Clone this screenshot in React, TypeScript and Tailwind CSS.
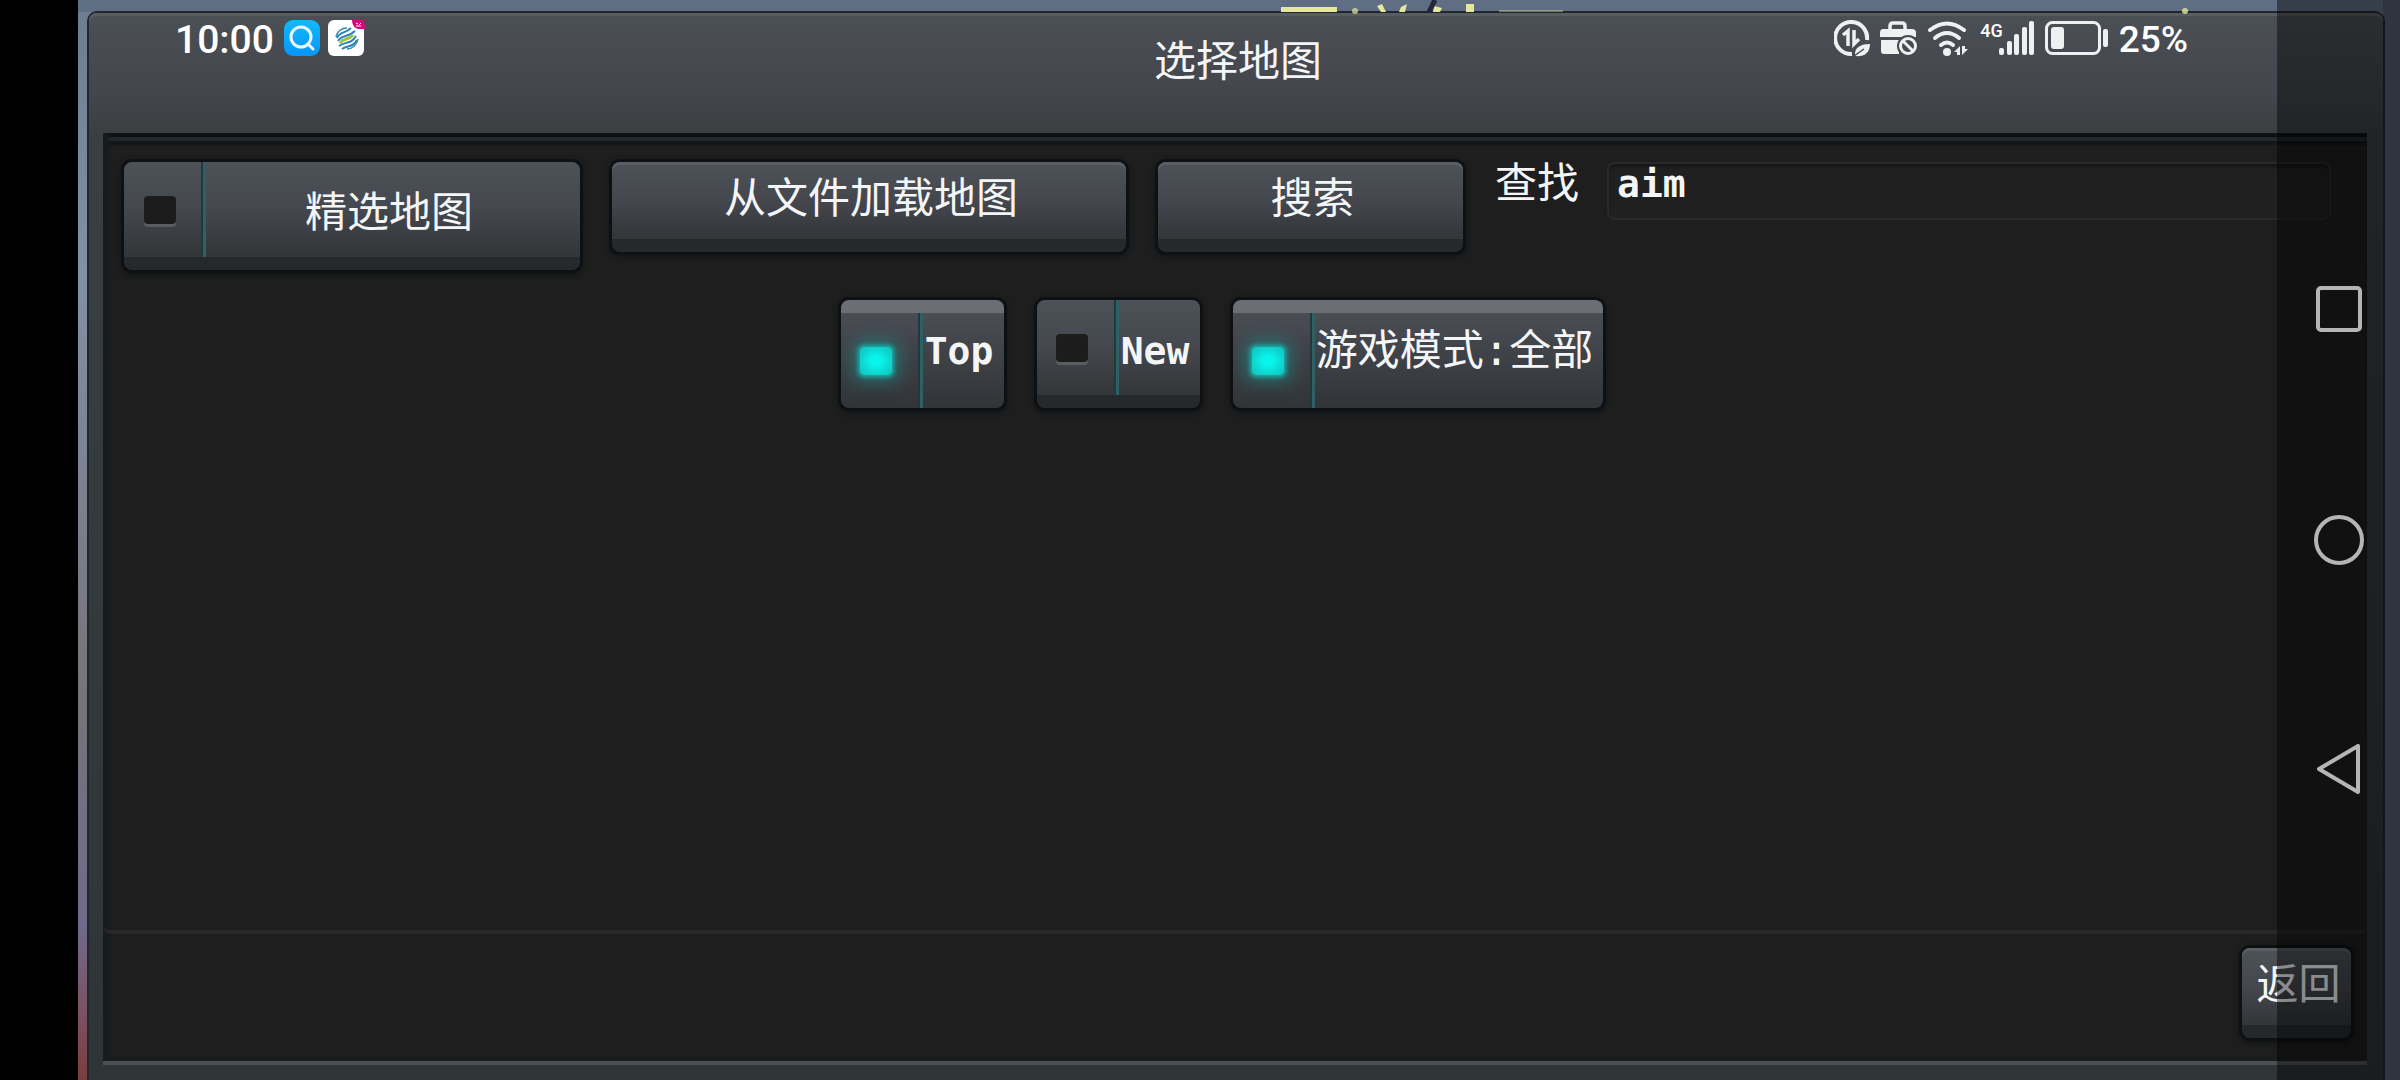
import { useState } from 'react';
import type { ReactNode } from 'react';
import clsx from 'clsx';

// 顶部露出的背景标题
const BackdropTitle = () => (
  <svg
    className="absolute top-0 left-[1281px]"
    width="910"
    height="14"
    viewBox="0 0 910 14"
    aria-hidden="true"
  >
    <g fill="#e6e79f">
      <rect x="0" y="7" width="56" height="5" />
      <circle cx="74" cy="11" r="3" opacity="0.7" />
      <path d="M96 6l5-2 4 8h-5z" />
      <path d="M126 4l-6 3-2 5h6z" />
      <path d="M153 6l8 2-2 4h-7z" />
      <rect x="185" y="4" width="8" height="8" />
      <rect x="218" y="10" width="64" height="2" opacity="0.4" />
      <circle cx="904" cy="11" r="3" opacity="0.8" />
    </g>
    <path d="M154 0l-6 12" stroke="#25253c" strokeWidth="5" />
  </svg>
);

const SearchAppIcon = () => (
  <svg width="36" height="36" viewBox="0 0 36 36" aria-hidden="true">
    <defs>
      <linearGradient id="searchBg" x1="0" y1="0" x2="0" y2="1">
        <stop offset="0" stopColor="#12b9fb" />
        <stop offset="1" stopColor="#0796fb" />
      </linearGradient>
    </defs>
    <rect width="36" height="36" rx="9" fill="url(#searchBg)" />
    <circle cx="17" cy="17" r="10" fill="none" stroke="#eaf8ff" strokeWidth="3" />
    <path d="M24 24l5 5" stroke="#eaf8ff" strokeWidth="3" strokeLinecap="round" />
  </svg>
);

const CarrierAppIcon = () => (
  <svg width="38" height="36" viewBox="0 0 38 36" aria-hidden="true">
    <rect width="36" height="36" rx="6" fill="#fff" />
    <g fill="none">
      <path d="M9 18c3-7 8-4 14-10" stroke="#2b7fc6" strokeWidth="2" />
      <path d="M10 21c4-7 10-3 17-10" stroke="#2b7fc6" strokeWidth="2" />
      <path d="M12 23c4-6 8-2 13-8" stroke="#9bc832" strokeWidth="3" />
      <path d="M11 26c6-5 12-1 17-10" stroke="#2b7fc6" strokeWidth="2" />
      <path d="M14 29c5-4 11-1 15-9" stroke="#2b7fc6" strokeWidth="2" />
      <path d="M8 17c1-6 6-9 11-9M30 19c-1 6-6 10-11 10" stroke="#2e8f9c" strokeWidth="1.5" />
    </g>
    <path d="M24 0h8q5 0 6 9h-7c-4 0-7-4-7-9z" fill="#d6087b" />
    <path d="M28 3l2 1M33 3l-2 2M28 6h5" stroke="#fff" strokeWidth="1" />
  </svg>
);

const DataSaverIcon = () => (
  <svg width="36" height="37" viewBox="0 0 36 37" aria-hidden="true">
    <path
      d="M33 20A16 16 0 1 0 18 34"
      fill="none"
      stroke="#eef0f2"
      strokeWidth="4"
    />
    <path d="M9 15l5-4v15M20 10v14l5-5" fill="none" stroke="#eef0f2" strokeWidth="3.5" />
    <path d="M36 24c-9 0-16 3-15 12 9 1 15-3 15-12z" fill="#eef0f2" />
    <path d="M20 36l10-7" stroke="#46494e" strokeWidth="1.5" />
  </svg>
);

const WorkOffIcon = () => (
  <svg width="38" height="35" viewBox="0 0 38 35" aria-hidden="true">
    <path d="M10 11V5q0-3 3-3h9q3 0 3 3v6" fill="none" stroke="#eef0f2" strokeWidth="3.5" />
    <path d="M3 8h29q4 0 4 4v4H0v-4q0-4 3-4z" fill="#eef0f2" />
    <path d="M1 19h18v14H4q-3 0-3-3z" fill="#eef0f2" />
    <circle cx="28" cy="25" r="11" fill="#46494e" />
    <circle cx="28" cy="25" r="7.5" fill="none" stroke="#eef0f2" strokeWidth="3" />
    <path d="M23 20l10 10" stroke="#eef0f2" strokeWidth="3" />
  </svg>
);

const WifiIcon = () => (
  <svg width="42" height="35" viewBox="0 0 42 35" aria-hidden="true">
    <g fill="none" stroke="#eef0f2" strokeWidth="4" strokeLinecap="round">
      <path d="M2 9Q19-4 36 9" />
      <path d="M7 17Q19 7 31 17" />
      <path d="M13 24q6-5 12 0" />
    </g>
    <circle cx="19" cy="31" r="4" fill="#eef0f2" />
    <path d="M26 31l6-6v9h-3v-3zM34 25v9l6-6h-3v-3z" fill="#eef0f2" />
  </svg>
);

const SignalIcon = () => (
  <svg width="36" height="34" viewBox="0 0 36 34" fill="#eef0f2" aria-hidden="true">
    <rect x="0" y="27" width="5" height="7" rx="2" />
    <rect x="8" y="20" width="5" height="14" rx="2" />
    <rect x="15" y="13" width="5" height="21" rx="2" />
    <rect x="23" y="6" width="5" height="28" rx="2" />
    <rect x="30" y="0" width="5" height="34" rx="2" />
  </svg>
);

const BatteryIcon = () => (
  <svg width="64" height="34" viewBox="0 0 64 34" aria-hidden="true">
    <rect x="1.5" y="1.5" width="53" height="31" rx="6" fill="none" stroke="#eef0f2" strokeWidth="3" />
    <rect x="6" y="6" width="13" height="22" rx="3" fill="#eef0f2" />
    <rect x="58" y="8" width="5" height="18" rx="2" fill="#eef0f2" />
  </svg>
);

const StatusBar = () => (
  <div className="absolute inset-x-0 top-0 flex h-19 items-center justify-between pr-[212px] pl-[175px] font-['Roboto',sans-serif] text-[39px] font-medium text-white">
    <div className="flex items-center gap-2.5">
      <span className="pt-1 leading-10">10:00</span>
      <div className="flex gap-2">
        <SearchAppIcon />
        <CarrierAppIcon />
      </div>
    </div>
    <div className="flex items-center gap-2.5">
      <DataSaverIcon />
      <WorkOffIcon />
      <WifiIcon />
      <div className="flex items-start">
        <span className="-mr-1 text-[18px] leading-5">4G</span>
        <SignalIcon />
      </div>
      <BatteryIcon />
      <span className="pt-1 text-[37px] leading-10">25%</span>
    </div>
  </div>
);

// 带指示灯的开关按钮
const Toggle = ({ children, defaultOn = false, className }: {
  children: ReactNode;
  defaultOn?: boolean;
  className?: string;
}) => {
  const [on, setOn] = useState(defaultOn);

  return (
    <label
      className={clsx(
        'flex h-[108px] cursor-pointer overflow-hidden rounded-lg bg-linear-to-b shadow-[0_0_0_3px_#0d1114,0_2px_6px_2px_#0d1114]',
        on
          ? 'border-t-[13px] border-[#6b6f75] from-[#4a4d54] to-[#313437]'
          : 'border-b-[13px] border-[#25292c] from-[#4d5258] via-[#44474e] to-[#323638]',
        className,
      )}
    >
      <span className="flex w-[77px] shrink-0 items-center justify-center pr-1.5">
        <input
          type="checkbox"
          checked={on}
          onChange={(e) => setOn(e.target.checked)}
          className={clsx(
            'h-7 w-8 appearance-none rounded-sm',
            on
              ? 'bg-[radial-gradient(#08f5ec_20%,#14bcb8)] shadow-[0_0_4px_2px_#17b3ae,0_0_16px_8px_#178f8b80]'
              : 'bg-[#1c1c1c] shadow-[0_3px_0_#5a5e63]',
          )}
        />
      </span>
      <span className="w-[5px] shrink-0 border-l-2 border-[#22383c] bg-[#2f6164]" />
      <span className={clsx('flex-1 pr-2 text-center', on ? 'leading-[76px]' : 'leading-[102px]')}>
        {children}
      </span>
    </label>
  );
};

const PanelButton = ({ children, className }: {
  children: ReactNode;
  className?: string;
}) => (
  <button
    type="button"
    className={clsx(
      'h-[90px] cursor-pointer rounded-lg border-b-[13px] border-[#25292c] bg-linear-to-b from-[#4d5158] via-[#44474e] to-[#323638] pb-1 pl-1 shadow-[0_0_0_3px_#0d1114,0_2px_6px_2px_#0d1114,inset_0_3px_0_#5b5e64]',
      className,
    )}
  >
    {children}
  </button>
);

// 系统导航栏
const NavBar = () => (
  <nav className="absolute inset-y-0 right-0 flex w-[123px] flex-col items-center justify-center gap-[178px] bg-black/43">
    <button type="button" aria-label="最近任务">
      <svg width="52" height="52" viewBox="0 0 52 52" fill="none" stroke="#b5b5b5" strokeWidth="4">
        <rect x="5" y="4" width="42" height="42" rx="3" />
      </svg>
    </button>
    <button type="button" aria-label="主屏幕">
      <svg width="52" height="52" viewBox="0 0 52 52" fill="none" stroke="#b5b5b5" strokeWidth="4">
        <circle cx="26" cy="26" r="23" />
      </svg>
    </button>
    <button type="button" aria-label="后退">
      <svg width="52" height="52" viewBox="0 0 52 52" fill="none" stroke="#b5b5b5" strokeWidth="4" strokeLinejoin="round">
        <path d="M6 25L45 2v46z" />
      </svg>
    </button>
  </nav>
);

const App = () => {
  const [query, setQuery] = useState('aim');

  return (
    <div className="relative flex min-h-screen bg-black pl-[78px] font-['DejaVu_Sans_Mono','Noto_Sans_CJK_SC',sans-serif] text-[#f3f5f7]">
      <div className="flex flex-1 bg-[linear-gradient(#6d7c8f,#8290a5_25%,#76737a_65%,#71698a_86%,#7c5062_94%,#7a3d3c)] pt-[13px] pr-[17px] pl-[11px] shadow-[inset_-17px_0_0_#515d71,inset_0_12px_0_#5f6e82]">
        {/* 地图选择窗口 */}
        <main className="flex flex-1 flex-col rounded-t-lg bg-[linear-gradient(#4b5055,#43464d_80px,#3b3f41_121px,#363b3e_400px,#2f3437)] pr-4 pb-[15px] pl-3.5 text-[42px] shadow-[0_0_0_2px_#1d2831,inset_0_3px_0_#5a5d60]">
          <h1 className="h-[120px] pl-1.5 text-center leading-[98px]">选择地图</h1>

          <div className="flex flex-1 flex-col border-b-4 border-[#4c5053] bg-[#1e1e1e] shadow-[inset_6px_0_4px_#171c1e,inset_0_4px_0_#0c1013,inset_0_8px_0_#22282b,inset_0_12px_2px_#11171a]">
            <div className="flex-1 rounded-b-lg border-b-4 border-[#282828] pt-[29px] pr-9 pl-[21px]">
              {/* 搜索栏 */}
              <div className="flex items-start gap-8">
                <Toggle className="w-[456px]">精选地图</Toggle>
                <PanelButton className="w-[514px]">从文件加载地图</PanelButton>
                <PanelButton className="w-[305px]">搜索</PanelButton>
                <div className="flex flex-1 gap-7">
                  <label htmlFor="map-query" className="leading-11">查找</label>
                  <input
                    id="map-query"
                    type="text"
                    value={query}
                    onChange={(e) => setQuery(e.target.value)}
                    className="h-[58px] min-w-0 flex-1 rounded-lg border-2 border-[#292929] bg-[#202020] pb-3.5 pl-2 text-[38px] font-bold shadow-[inset_0_3px_2px_#171717] outline-none"
                  />
                </div>
              </div>

              {/* 筛选条件 */}
              <div className="mt-[30px] flex justify-center gap-[33px] pr-3">
                <Toggle defaultOn className="w-[163px] text-[38px] font-bold">Top</Toggle>
                <Toggle className="w-[163px] text-[38px] font-bold">New</Toggle>
                <Toggle defaultOn className="w-[370px]">游戏模式:全部</Toggle>
              </div>
            </div>

            <footer className="flex justify-end pt-3.5 pr-4 pb-[23px]">
              <PanelButton className="w-[109px]">返回</PanelButton>
            </footer>
          </div>
        </main>
      </div>

      <BackdropTitle />
      <StatusBar />
      <NavBar />
    </div>
  );
};

export default App;
